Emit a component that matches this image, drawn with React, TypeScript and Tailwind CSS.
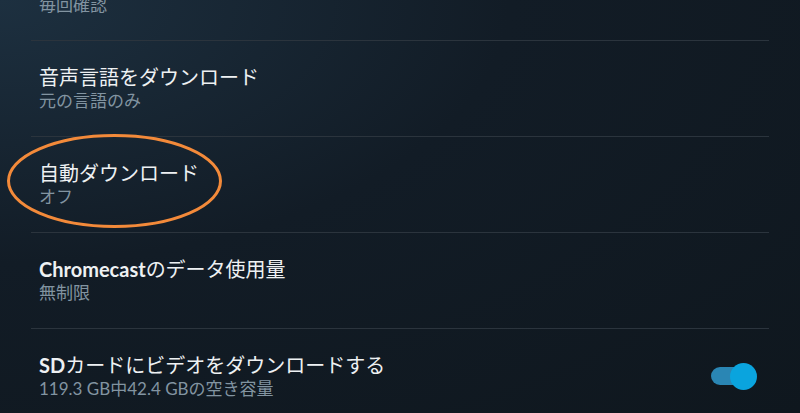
const font = "font-['Lato','Noto_Sans_CJK_JP',sans-serif]";

type Row = { title?: React.ReactNode; sub: string; toggle?: boolean };

const rows: Row[] = [
  { sub: "毎回確認" },
  { title: "音声言語をダウンロード", sub: "元の言語のみ" },
  { title: "自動ダウンロード", sub: "オフ" },
  { title: <><span className="font-bold">Chromecast</span>のデータ使用量</>, sub: "無制限" },
  { title: <><span className="font-bold">SD</span>カードにビデオをダウンロードする</>, sub: "119.3 GB中42.4 GBの空き容量", toggle: true },
];

function Toggle() {
  return (
    <div className="relative w-[46px] h-[27px] flex items-center">
      <div className="w-[40px] h-[18px] rounded-full bg-[#2a86b4]" />
      <div className="absolute right-0 top-0 w-[27px] h-[27px] rounded-full bg-[#0aa4de]" />
    </div>
  );
}

export default function App() {
  return (
    <div className={`relative w-[800px] h-[413px] overflow-hidden bg-[radial-gradient(ellipse_at_0%_0%,#1d3040_0%,#121c26_45%,#0f171e_100%)] ${font}`}>
      <div className="-mt-[55px] pl-[31px] pr-[31px]">
        {rows.map((r, i) => (
          <div key={i} className="flex items-center justify-between border-b border-[#2b343d] pl-[8px] pr-[12px] pt-[23px] pb-[24px]">
            <div>
              <div className="h-[26px] text-[20px] leading-[26px] text-[#eef1f3]">{r.title}</div>
              <div className="text-[17px] leading-[22px] text-[#8294a1]">{r.sub}</div>
            </div>
            {r.toggle && <Toggle />}
          </div>
        ))}
      </div>

      {/* annotation circle */}
      <svg className="absolute left-0 top-0" width="800" height="413">
        <ellipse cx="114.5" cy="181" rx="106" ry="45.5" fill="none" stroke="#f38a3a" strokeWidth="3" />
      </svg>
    </div>
  );
}
